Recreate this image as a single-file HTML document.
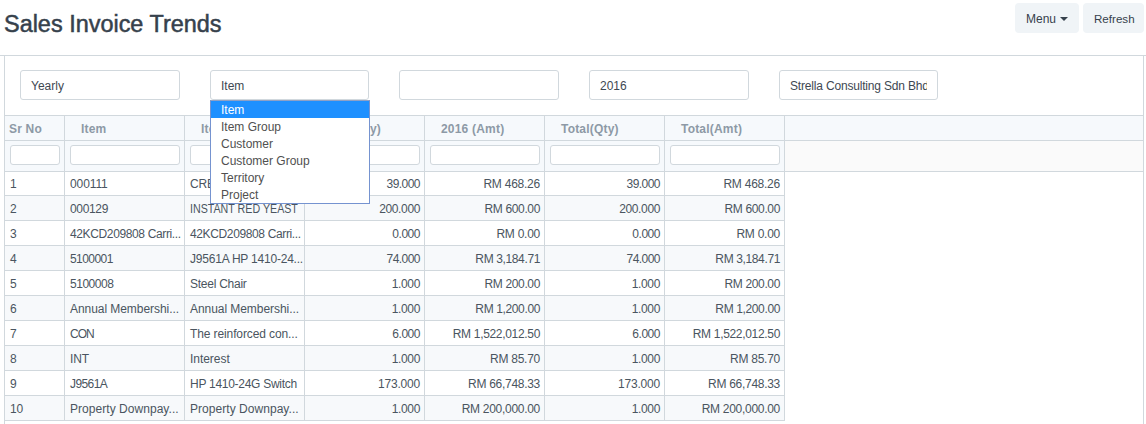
<!DOCTYPE html>
<html><head><meta charset="utf-8">
<style>
*{box-sizing:border-box;margin:0;padding:0}
html,body{width:1146px;height:424px;overflow:hidden;background:#fff}
body{font-family:"Liberation Sans",sans-serif;color:#36414c;font-size:12px;position:relative}
.abs{position:absolute}
.title{left:4px;top:9px;font-size:23.45px;-webkit-text-stroke:0.5px #36414c;line-height:30px;color:#36414c;white-space:nowrap}
.btn{position:absolute;top:3px;height:30px;background:#f0f4f7;border-radius:4px;font-size:12px;line-height:32px;color:#36414c;white-space:nowrap}
.container{position:absolute;left:0;top:55px;width:1146px;height:1px;background:#d1d8dd}
.inp{position:absolute;top:70px;height:30px;width:160px;border:1px solid #d1d8dd;border-radius:3px;background:#fff;font-size:12px;line-height:31px;padding-left:10px;color:#3e4852;white-space:nowrap;overflow:hidden}
.hdr{position:absolute;left:4px;top:115px;width:1140px;height:26px;background:#f6f9fc;border-top:1px solid #d1d8dd;border-bottom:1px solid #d1d8dd}
.flt{position:absolute;left:4px;top:141px;width:1140px;height:31px;background:#fafafa;border-bottom:1px solid #d1d8dd}
.vl{position:absolute;width:1px;background:#d1d8dd}
.hl{position:absolute;height:1px;background:#d1d8dd}
.ht{position:absolute;top:117px;line-height:24px;font-weight:bold;color:#8d99a6;font-size:12px;letter-spacing:0.2px;white-space:nowrap;overflow:hidden}
.fi{position:absolute;top:145px;height:20px;border:1px solid #d1d8dd;border-radius:3px;background:#fff}
.row{position:absolute;left:4px;width:781px;height:24px}
.row.even{background:#f7f9fb}
.c{position:absolute;line-height:25px;height:24px;white-space:nowrap;font-size:12px;color:#4a5560;overflow:hidden}
.r{text-align:right}
.dd{position:absolute;left:210px;top:100px;width:160px;height:104px;background:#fff;border:1px solid #7593d0;border-top-color:#8fa1c6}
.dd div{height:17px;line-height:19px;padding-left:10px;font-size:12px;color:#505050;white-space:nowrap}
.dd .sel{background:#1e90ff;color:#fff}

</style></head>
<body>
<div class="abs title">Sales Invoice Trends</div>
<div class="btn" style="left:1015px;width:64px;padding-left:11px">Menu<span style="display:inline-block;width:0;height:0;border-left:4px solid transparent;border-right:4px solid transparent;border-top:4px solid #36414c;vertical-align:middle;margin-left:4px;position:relative;top:-1px"></span></div>
<div class="btn" style="left:1083px;width:61px;padding-left:11px;font-size:11.6px">Refresh</div>
<div class="container"></div>
<div class="inp" style="left:20px;width:160px">Yearly</div>
<div class="inp" style="left:210px;width:159px">Item</div>
<div class="inp" style="left:399px;width:160px"></div>
<div class="inp" style="left:589px;width:160px">2016</div>
<div class="inp" style="left:779px;width:159px"><div style="width:137px;overflow:hidden;letter-spacing:-0.18px">Strella Consulting Sdn Bhd</div></div>
<div class="hdr"></div>
<div class="flt"></div>
<div style="position:absolute;left:4px;top:141px;width:781px;height:30px;background:#f6f9fc"></div>
<div class="row" style="top:171px"></div>
<div class="c" style="left:4px;width:60px;top:172px;padding-left:6px;letter-spacing:-0.2px">1</div>
<div class="c" style="left:64px;width:120px;top:172px;padding-left:6px;letter-spacing:-0.1px">000111</div>
<div class="c" style="left:184px;width:120px;top:172px;padding-left:6px;letter-spacing:-0.2px">CREAM</div>
<div class="c r" style="left:304px;width:120px;top:172px;padding-right:4px;letter-spacing:-0.54px">39.000</div>
<div class="c r" style="left:424px;width:120px;top:172px;padding-right:4px;letter-spacing:-0.237px">RM 468.26</div>
<div class="c r" style="left:544px;width:120px;top:172px;padding-right:4px;letter-spacing:-0.54px">39.000</div>
<div class="c r" style="left:664px;width:120px;top:172px;padding-right:4px;letter-spacing:-0.237px">RM 468.26</div>
<div class="hl" style="left:4px;width:781px;top:195px"></div>
<div class="row even" style="top:196px"></div>
<div class="c" style="left:4px;width:60px;top:197px;padding-left:6px;letter-spacing:-0.2px">2</div>
<div class="c" style="left:64px;width:120px;top:197px;padding-left:6px;letter-spacing:-0.34px">000129</div>
<div class="c" style="left:184px;width:120px;top:197px;padding-left:6px"><span style="display:inline-block;transform:scaleX(0.889);transform-origin:0 0">INSTANT RED YEAST</span></div>
<div class="c r" style="left:304px;width:120px;top:197px;padding-right:4px;letter-spacing:-0.367px">200.000</div>
<div class="c r" style="left:424px;width:120px;top:197px;padding-right:4px;letter-spacing:-0.362px">RM 600.00</div>
<div class="c r" style="left:544px;width:120px;top:197px;padding-right:4px;letter-spacing:-0.367px">200.000</div>
<div class="c r" style="left:664px;width:120px;top:197px;padding-right:4px;letter-spacing:-0.362px">RM 600.00</div>
<div class="hl" style="left:4px;width:781px;top:220px"></div>
<div class="row" style="top:221px"></div>
<div class="c" style="left:4px;width:60px;top:222px;padding-left:6px;letter-spacing:-0.2px">3</div>
<div class="c" style="left:64px;width:120px;top:222px;padding-left:6px;letter-spacing:-0.368px">42KCD209808 Carri...</div>
<div class="c" style="left:184px;width:120px;top:222px;padding-left:6px;letter-spacing:-0.368px">42KCD209808 Carri...</div>
<div class="c r" style="left:304px;width:120px;top:222px;padding-right:4px;letter-spacing:-0.475px">0.000</div>
<div class="c r" style="left:424px;width:120px;top:222px;padding-right:4px;letter-spacing:-0.25px">RM 0.00</div>
<div class="c r" style="left:544px;width:120px;top:222px;padding-right:4px;letter-spacing:-0.475px">0.000</div>
<div class="c r" style="left:664px;width:120px;top:222px;padding-right:4px;letter-spacing:-0.25px">RM 0.00</div>
<div class="hl" style="left:4px;width:781px;top:245px"></div>
<div class="row even" style="top:246px"></div>
<div class="c" style="left:4px;width:60px;top:247px;padding-left:6px;letter-spacing:-0.2px">4</div>
<div class="c" style="left:64px;width:120px;top:247px;padding-left:6px;letter-spacing:-0.567px">5100001</div>
<div class="c" style="left:184px;width:120px;top:247px;padding-left:6px;letter-spacing:-0.211px">J9561A HP 1410-24...</div>
<div class="c r" style="left:304px;width:120px;top:247px;padding-right:4px;letter-spacing:-0.54px">74.000</div>
<div class="c r" style="left:424px;width:120px;top:247px;padding-right:4px;letter-spacing:-0.37px">RM 3,184.71</div>
<div class="c r" style="left:544px;width:120px;top:247px;padding-right:4px;letter-spacing:-0.54px">74.000</div>
<div class="c r" style="left:664px;width:120px;top:247px;padding-right:4px;letter-spacing:-0.37px">RM 3,184.71</div>
<div class="hl" style="left:4px;width:781px;top:270px"></div>
<div class="row" style="top:271px"></div>
<div class="c" style="left:4px;width:60px;top:272px;padding-left:6px;letter-spacing:-0.2px">5</div>
<div class="c" style="left:64px;width:120px;top:272px;padding-left:6px;letter-spacing:-0.467px">5100008</div>
<div class="c" style="left:184px;width:120px;top:272px;padding-left:6px;letter-spacing:-0.25px">Steel Chair</div>
<div class="c r" style="left:304px;width:120px;top:272px;padding-right:4px;letter-spacing:-0.35px">1.000</div>
<div class="c r" style="left:424px;width:120px;top:272px;padding-right:4px;letter-spacing:-0.362px">RM 200.00</div>
<div class="c r" style="left:544px;width:120px;top:272px;padding-right:4px;letter-spacing:-0.35px">1.000</div>
<div class="c r" style="left:664px;width:120px;top:272px;padding-right:4px;letter-spacing:-0.362px">RM 200.00</div>
<div class="hl" style="left:4px;width:781px;top:295px"></div>
<div class="row even" style="top:296px"></div>
<div class="c" style="left:4px;width:60px;top:297px;padding-left:6px;letter-spacing:-0.2px">6</div>
<div class="c" style="left:64px;width:120px;top:297px;padding-left:6px;letter-spacing:-0.056px">Annual Membershi...</div>
<div class="c" style="left:184px;width:120px;top:297px;padding-left:6px;letter-spacing:-0.056px">Annual Membershi...</div>
<div class="c r" style="left:304px;width:120px;top:297px;padding-right:4px;letter-spacing:-0.35px">1.000</div>
<div class="c r" style="left:424px;width:120px;top:297px;padding-right:4px;letter-spacing:-0.37px">RM 1,200.00</div>
<div class="c r" style="left:544px;width:120px;top:297px;padding-right:4px;letter-spacing:-0.35px">1.000</div>
<div class="c r" style="left:664px;width:120px;top:297px;padding-right:4px;letter-spacing:-0.37px">RM 1,200.00</div>
<div class="hl" style="left:4px;width:781px;top:320px"></div>
<div class="row" style="top:321px"></div>
<div class="c" style="left:4px;width:60px;top:322px;padding-left:6px;letter-spacing:-0.2px">7</div>
<div class="c" style="left:64px;width:120px;top:322px;padding-left:6px;letter-spacing:-1.0px">CON</div>
<div class="c" style="left:184px;width:120px;top:322px;padding-left:6px;letter-spacing:-0.11px">The reinforced con...</div>
<div class="c r" style="left:304px;width:120px;top:322px;padding-right:4px;letter-spacing:-0.475px">6.000</div>
<div class="c r" style="left:424px;width:120px;top:322px;padding-right:4px;letter-spacing:-0.321px">RM 1,522,012.50</div>
<div class="c r" style="left:544px;width:120px;top:322px;padding-right:4px;letter-spacing:-0.475px">6.000</div>
<div class="c r" style="left:664px;width:120px;top:322px;padding-right:4px;letter-spacing:-0.321px">RM 1,522,012.50</div>
<div class="hl" style="left:4px;width:781px;top:345px"></div>
<div class="row even" style="top:346px"></div>
<div class="c" style="left:4px;width:60px;top:347px;padding-left:6px;letter-spacing:-0.2px">8</div>
<div class="c" style="left:64px;width:120px;top:347px;padding-left:6px;letter-spacing:-0.1px">INT</div>
<div class="c" style="left:184px;width:120px;top:347px;padding-left:6px;letter-spacing:-0.043px">Interest</div>
<div class="c r" style="left:304px;width:120px;top:347px;padding-right:4px;letter-spacing:-0.35px">1.000</div>
<div class="c r" style="left:424px;width:120px;top:347px;padding-right:4px;letter-spacing:-0.257px">RM 85.70</div>
<div class="c r" style="left:544px;width:120px;top:347px;padding-right:4px;letter-spacing:-0.35px">1.000</div>
<div class="c r" style="left:664px;width:120px;top:347px;padding-right:4px;letter-spacing:-0.257px">RM 85.70</div>
<div class="hl" style="left:4px;width:781px;top:370px"></div>
<div class="row" style="top:371px"></div>
<div class="c" style="left:4px;width:60px;top:372px;padding-left:6px;letter-spacing:-0.2px">9</div>
<div class="c" style="left:64px;width:120px;top:372px;padding-left:6px;letter-spacing:-0.58px">J9561A</div>
<div class="c" style="left:184px;width:120px;top:372px;padding-left:6px;letter-spacing:-0.271px">HP 1410-24G Switch</div>
<div class="c r" style="left:304px;width:120px;top:372px;padding-right:4px;letter-spacing:-0.2px">173.000</div>
<div class="c r" style="left:424px;width:120px;top:372px;padding-right:4px;letter-spacing:-0.291px">RM 66,748.33</div>
<div class="c r" style="left:544px;width:120px;top:372px;padding-right:4px;letter-spacing:-0.2px">173.000</div>
<div class="c r" style="left:664px;width:120px;top:372px;padding-right:4px;letter-spacing:-0.291px">RM 66,748.33</div>
<div class="hl" style="left:4px;width:781px;top:395px"></div>
<div class="row even" style="top:396px"></div>
<div class="c" style="left:4px;width:60px;top:397px;padding-left:6px;letter-spacing:-0.2px">10</div>
<div class="c" style="left:64px;width:120px;top:397px;padding-left:6px;letter-spacing:0.044px">Property Downpay...</div>
<div class="c" style="left:184px;width:120px;top:397px;padding-left:6px;letter-spacing:0.044px">Property Downpay...</div>
<div class="c r" style="left:304px;width:120px;top:397px;padding-right:4px;letter-spacing:-0.35px">1.000</div>
<div class="c r" style="left:424px;width:120px;top:397px;padding-right:4px;letter-spacing:-0.292px">RM 200,000.00</div>
<div class="c r" style="left:544px;width:120px;top:397px;padding-right:4px;letter-spacing:-0.35px">1.000</div>
<div class="c r" style="left:664px;width:120px;top:397px;padding-right:4px;letter-spacing:-0.292px">RM 200,000.00</div>
<div class="hl" style="left:4px;width:781px;top:420px"></div>
<div class="ht" style="left:4px;width:60px;padding-left:5px">Sr No</div>
<div class="fi" style="left:10px;width:50px"></div>
<div class="ht" style="left:64px;width:120px;padding-left:17px">Item</div>
<div class="fi" style="left:70px;width:110px"></div>
<div class="ht" style="left:184px;width:120px;padding-left:17px">Item Name</div>
<div class="fi" style="left:190px;width:110px"></div>
<div class="ht" style="left:304px;width:120px;padding-left:17px">2016 (Qty)</div>
<div class="fi" style="left:310px;width:110px"></div>
<div class="ht" style="left:424px;width:120px;padding-left:17px">2016 (Amt)</div>
<div class="fi" style="left:430px;width:110px"></div>
<div class="ht" style="left:544px;width:120px;padding-left:17px">Total(Qty)</div>
<div class="fi" style="left:550px;width:110px"></div>
<div class="ht" style="left:664px;width:120px;padding-left:17px">Total(Amt)</div>
<div class="fi" style="left:670px;width:110px"></div>
<div class="vl" style="left:4px;top:115px;height:306px"></div>
<div class="vl" style="left:64px;top:115px;height:306px"></div>
<div class="vl" style="left:184px;top:115px;height:306px"></div>
<div class="vl" style="left:304px;top:115px;height:306px"></div>
<div class="vl" style="left:424px;top:115px;height:306px"></div>
<div class="vl" style="left:544px;top:115px;height:306px"></div>
<div class="vl" style="left:664px;top:115px;height:306px"></div>
<div class="vl" style="left:784px;top:115px;height:306px"></div>
<div class="vl" style="left:4px;top:55px;height:369px"></div>
<div class="vl" style="left:1143px;top:55px;height:369px"></div>
<div class="dd">
<div class="sel">Item</div>
<div>Item Group</div>
<div>Customer</div>
<div>Customer Group</div>
<div>Territory</div>
<div>Project</div>
</div>
</body></html>
